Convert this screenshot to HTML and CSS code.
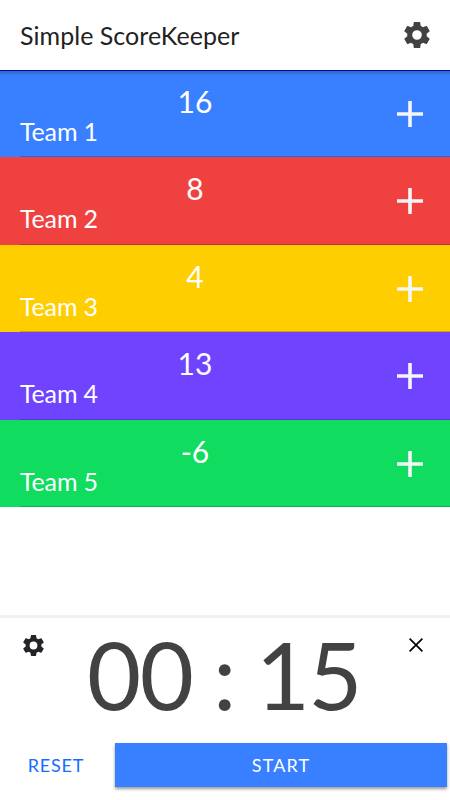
FILE: index.html
```html
<!DOCTYPE html>
<html lang="en">
<head>
    <meta charset="UTF-8">
    <title>Simple ScoreKeeper</title>
    <link rel="stylesheet" href="styles.css">
</head>
<body>
    <svg width="0" height="0" class="sprites">
        <symbol id="gear" viewBox="2 2 20 20">
            <path d="M19.43 12.98c.04-.32.07-.64.07-.98s-.03-.66-.07-.98l2.11-1.65c.19-.15.24-.42.12-.64l-2-3.46c-.12-.22-.39-.3-.61-.22l-2.49 1c-.52-.4-1.08-.73-1.69-.98l-.38-2.65C14.46 2.18 14.25 2 14 2h-4c-.25 0-.46.18-.49.42l-.38 2.65c-.61.25-1.17.59-1.69.98l-2.49-1c-.23-.09-.49 0-.61.22l-2 3.46c-.13.22-.07.49.12.64l2.11 1.65c-.04.32-.07.65-.07.98s.03.66.07.98l-2.11 1.65c-.19.15-.24.42-.12.64l2 3.46c.12.22.39.3.61.22l2.49-1c.52.4 1.08.73 1.69.98l.38 2.65c.03.24.24.42.49.42h4c.25 0 .46-.18.49-.42l.38-2.65c.61-.25 1.17-.59 1.69-.98l2.49 1c.23.09.49 0 .61-.22l2-3.46c.12-.22.07-.49-.12-.64l-2.11-1.65zM12 15.7a3.7 3.7 0 1 1 0-7.4 3.7 3.7 0 0 1 0 7.4z"/>
        </symbol>
        <symbol id="plus" viewBox="0 0 26 26">
            <path d="M11.2 0h3.6v11.2H26v3.6H14.8V26h-3.6V14.8H0v-3.6h11.2z"/>
        </symbol>
    </svg>
    <header class="toolbar">
        <h1>Simple ScoreKeeper</h1>
        <svg class="settings"><use href="#gear"/></svg>
    </header>
    <main class="teams">
        <div class="team blue">
            <div class="info"><div class="score">16</div><div class="name">Team 1</div></div>
            <svg class="add"><use href="#plus"/></svg>
        </div>
        <div class="team red">
            <div class="info"><div class="score">8</div><div class="name">Team 2</div></div>
            <svg class="add"><use href="#plus"/></svg>
        </div>
        <div class="team yellow">
            <div class="info"><div class="score">4</div><div class="name">Team 3</div></div>
            <svg class="add"><use href="#plus"/></svg>
        </div>
        <div class="team purple">
            <div class="info"><div class="score">13</div><div class="name">Team 4</div></div>
            <svg class="add"><use href="#plus"/></svg>
        </div>
        <div class="team green">
            <div class="info"><div class="score">-6</div><div class="name">Team 5</div></div>
            <svg class="add"><use href="#plus"/></svg>
        </div>
    </main>
    <footer class="timer">
        <div class="clock">
            <svg class="timer-settings"><use href="#gear"/></svg>
            <div class="time">00 : 15</div>
            <svg class="close" viewBox="0 0 14 14"><path d="M.6.6l12.8 12.8M13.4.6L.6 13.4"/></svg>
        </div>
        <div class="buttons">
            <button class="reset">RESET</button>
            <button class="start">START</button>
        </div>
    </footer>
</body>
</html>
```

FILE: styles.css
```css
* {
    box-sizing: border-box;
}

body {
    display: flex;
    flex-direction: column;
    height: 800px;
    margin: 0;
    font-family: Lato, sans-serif;
    background: white;
    overflow: hidden;
}

.sprites {
    display: none;
}

.toolbar {
    display: flex;
    align-items: center;
    justify-content: space-between;
    height: 70px;
    padding: 0 20px;
}

.toolbar h1 {
    margin: 0 0 1px;
    font-size: 25px;
    font-weight: 400;
    letter-spacing: .04px;
    color: #222;
}

.settings {
    width: 26px;
    height: 26px;
    fill: #424242;
}

.teams {
    flex: 1;
}

.team {
    display: flex;
    height: 87.45px;
    color: white;
    background-repeat: no-repeat;
    background-position: 20px 100%, 0 0;
    background-size: 100% 1px, 100% 6px;
    background-image: linear-gradient(rgba(0, 0, 0, .2), rgba(0, 0, 0, .2));
}

.blue {
    background-color: #3880ff;
    background-image: linear-gradient(#1c6ce0, #1c6ce0),
        linear-gradient(#0505a8 1px, #2f69c8 1px, #3880ff);
}

.red {
    background-color: #f04141;
}

.yellow {
    background-color: #ffce00;
}

.purple {
    background-color: #7044ff;
}

.green {
    background-color: #10dc60;
}

.info {
    width: 390px;
    padding-top: 13px;
}

.score {
    font-size: 30px;
    line-height: 36px;
    text-align: center;
}

.name {
    padding-left: 20px;
    font-size: 25px;
    line-height: 25px;
    letter-spacing: -.15px;
}

.add {
    width: 26px;
    height: 26px;
    margin: 31px 0 0 7px;
    fill: #f4f5f8;
}

.timer {
    height: 185px;
    border-top: 3px solid #f0f0f0;
}

.clock {
    display: flex;
    height: 125px;
    padding: 0 27px 0 23px;
}

.timer-settings {
    width: 21px;
    height: 21px;
    margin-top: 16.5px;
    fill: #222428;
}

.time {
    flex: 1;
    padding-right: 5px;
    font-size: 93.5px;
    line-height: 112px;
    letter-spacing: -1.6px;
    word-spacing: -1.5px;
    text-align: center;
    white-space: nowrap;
    color: #424242;
}

.close {
    width: 14px;
    height: 14px;
    margin-top: 20px;
    fill: none;
    stroke: black;
    stroke-width: 1.7;
}

.buttons {
    display: flex;
    gap: 3px;
    padding: 0 3px 0 0;
}

button {
    height: 44px;
    padding: 0;
    border: none;
    font: 400 18px Lato, sans-serif;
    letter-spacing: 1.1px;
}

.reset {
    width: 112px;
    background: none;
    color: #146dff;
    letter-spacing: .8px;
}

.start {
    flex: 1;
    background: #3880ff;
    color: white;
    box-shadow: 0 2px 3px rgba(0, 0, 0, .4);
}
```
